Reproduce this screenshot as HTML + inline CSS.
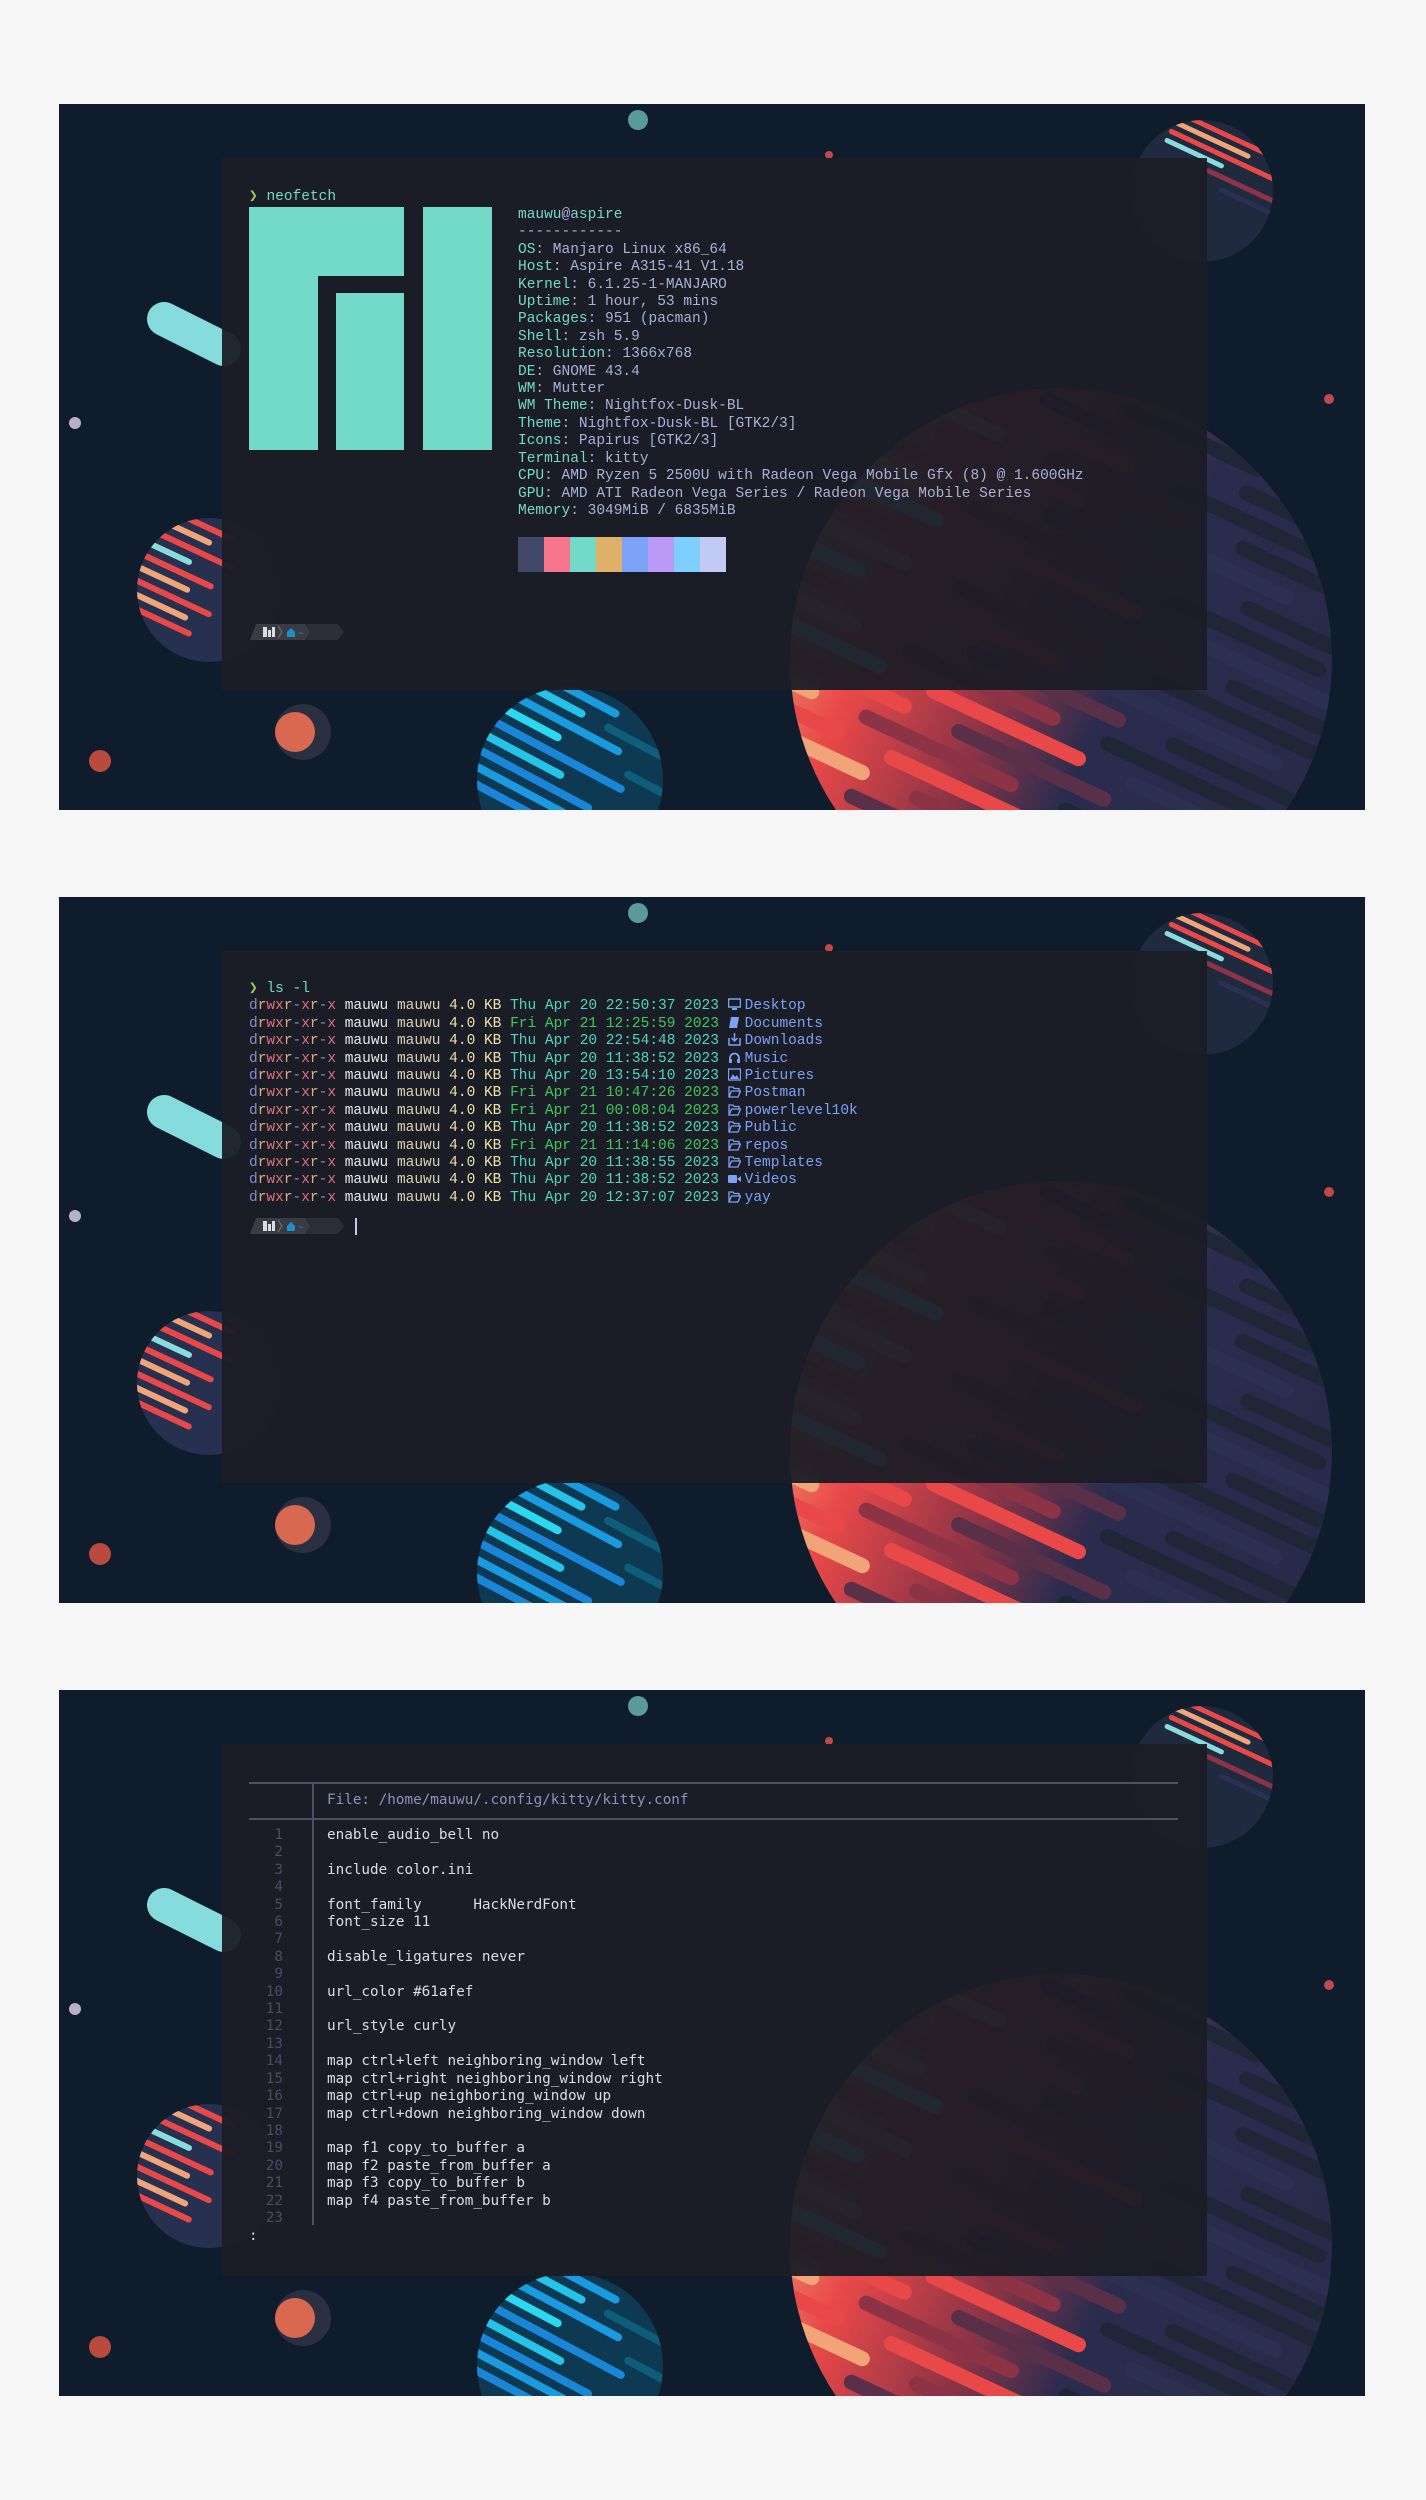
<!DOCTYPE html>
<html><head><meta charset="utf-8">
<style>
*{margin:0;padding:0;box-sizing:border-box}
html,body{width:1426px;height:2500px;overflow:hidden}
body{background:#f6f6f6;position:relative;font-family:"Liberation Mono","DejaVu Sans Mono",monospace}
.panel{position:absolute;left:59px;width:1306px;height:706px;background:#0f1c2b;overflow:hidden}
.panel svg.bg{position:absolute;left:0;top:0}
.term{position:absolute;left:163px;top:54px;width:985px;height:532px;background:rgba(27,28,38,0.95)}
.t{position:absolute;font-size:14.5px;line-height:17.4px;white-space:pre;color:#a9b1d6}
.k{color:#73daca}
.g{color:#9ece6a}
.bar{position:absolute;width:94px;height:16px}
.sw{position:absolute;top:379px;left:296px;height:35px;display:flex}
.sw span{width:26px;height:35px;display:block}
.conf{font-family:"DejaVu Sans Mono","Liberation Mono",monospace;font-size:14.3px;color:#dcdce4}
.num{position:absolute;font-family:"DejaVu Sans Mono",monospace;font-size:14.3px;line-height:17.4px;color:#4a4d62;text-align:right;width:40px;white-space:pre}
.d{color:#7f8fc9}.r{color:#d7b07a}.w{color:#e0707c}.x{color:#e0707c}.m{color:#8a8fb0}
.u{color:#e6e6e6}.gr{color:#d9d2ae}.sz{color:#ece3a6}.th{color:#4fd6be}.fr{color:#3fc95a}.n{color:#7aa2f7}
.ic{display:inline-block;width:13px;height:13px;vertical-align:-2px;margin-right:4px}
</style></head><body>

<svg width="0" height="0" style="position:absolute;left:0;top:0">
<defs>
<clipPath id="bp1"><circle cx="1002" cy="555" r="271"/></clipPath>
<clipPath id="bl1"><circle cx="511" cy="676" r="93"/></clipPath>
<clipPath id="tr1"><circle cx="1143" cy="87" r="71"/></clipPath>
<clipPath id="lp1"><circle cx="150" cy="486" r="72"/></clipPath>
<linearGradient id="gb" x1="731" y1="400" x2="1273" y2="650" gradientUnits="userSpaceOnUse"><stop offset="0" stop-color="#f0a478"/><stop offset="0.22" stop-color="#e84848"/><stop offset="0.45" stop-color="#8c3446"/><stop offset="0.62" stop-color="#2a2c4e"/><stop offset="1" stop-color="#272a48"/></linearGradient>
<symbol id="scene" viewBox="0 0 1306 706">
<g clip-path="url(#bp1)"><rect x="720" y="270" width="600" height="600" fill="url(#gb)"/>
<g stroke-linecap="round" stroke-width="15" transform="rotate(25 1002 555)">
<line x1="760" y1="300" x2="900" y2="300" stroke="#8c3446"/><line x1="960" y1="300" x2="1100" y2="300" stroke="#1f2636"/>
<line x1="700" y1="326" x2="820" y2="326" stroke="#e84848"/><line x1="880" y1="326" x2="1040" y2="326" stroke="#5a3048"/><line x1="1100" y1="326" x2="1260" y2="326" stroke="#1f2636"/>
<line x1="700" y1="352" x2="780" y2="352" stroke="#88dcdc"/><line x1="840" y1="352" x2="980" y2="352" stroke="#e84848"/><line x1="1040" y1="352" x2="1200" y2="352" stroke="#1f2636"/>
<line x1="700" y1="378" x2="850" y2="378" stroke="#f0a478"/><line x1="910" y1="378" x2="1060" y2="378" stroke="#8c3446"/><line x1="1120" y1="378" x2="1300" y2="378" stroke="#1f2636"/>
<line x1="700" y1="404" x2="760" y2="404" stroke="#88dcdc"/><line x1="800" y1="404" x2="950" y2="404" stroke="#e84848"/><line x1="1010" y1="404" x2="1180" y2="404" stroke="#2b3050"/>
<line x1="700" y1="430" x2="870" y2="430" stroke="#e84848"/><line x1="930" y1="430" x2="1080" y2="430" stroke="#5a3048"/><line x1="1150" y1="430" x2="1320" y2="430" stroke="#1f2636"/>
<line x1="700" y1="456" x2="800" y2="456" stroke="#f0a478"/><line x1="860" y1="456" x2="1020" y2="456" stroke="#8c3446"/><line x1="1080" y1="456" x2="1240" y2="456" stroke="#1f2636"/>
<line x1="700" y1="482" x2="830" y2="482" stroke="#88dcdc"/><line x1="890" y1="482" x2="1050" y2="482" stroke="#e84848"/><line x1="1110" y1="482" x2="1300" y2="482" stroke="#2b3050"/>
<line x1="700" y1="508" x2="900" y2="508" stroke="#e84848"/><line x1="960" y1="508" x2="1120" y2="508" stroke="#5a3048"/><line x1="1170" y1="508" x2="1320" y2="508" stroke="#1f2636"/>
<line x1="700" y1="534" x2="820" y2="534" stroke="#f0a478"/><line x1="880" y1="534" x2="1040" y2="534" stroke="#8c3446"/><line x1="1100" y1="534" x2="1280" y2="534" stroke="#1f2636"/>
<line x1="700" y1="560" x2="780" y2="560" stroke="#88dcdc"/><line x1="840" y1="560" x2="1000" y2="560" stroke="#e84848"/><line x1="1060" y1="560" x2="1240" y2="560" stroke="#2b3050"/>
<line x1="700" y1="586" x2="860" y2="586" stroke="#e84848"/><line x1="920" y1="586" x2="1080" y2="586" stroke="#5a3048"/><line x1="1140" y1="586" x2="1320" y2="586" stroke="#1f2636"/>
<line x1="700" y1="612" x2="800" y2="612" stroke="#f0a478"/><line x1="860" y1="612" x2="1020" y2="612" stroke="#8c3446"/><line x1="1080" y1="612" x2="1250" y2="612" stroke="#1f2636"/>
<line x1="700" y1="638" x2="840" y2="638" stroke="#88dcdc"/><line x1="900" y1="638" x2="1060" y2="638" stroke="#e84848"/><line x1="1120" y1="638" x2="1300" y2="638" stroke="#2b3050"/>
<line x1="700" y1="664" x2="880" y2="664" stroke="#e84848"/><line x1="940" y1="664" x2="1100" y2="664" stroke="#5a3048"/><line x1="1160" y1="664" x2="1320" y2="664" stroke="#1f2636"/>
<line x1="700" y1="690" x2="790" y2="690" stroke="#f0a478"/><line x1="850" y1="690" x2="1010" y2="690" stroke="#8c3446"/><line x1="1070" y1="690" x2="1240" y2="690" stroke="#1f2636"/>
<line x1="700" y1="716" x2="830" y2="716" stroke="#e84848"/><line x1="890" y1="716" x2="1050" y2="716" stroke="#e84848"/><line x1="1110" y1="716" x2="1290" y2="716" stroke="#2b3050"/>
<line x1="700" y1="742" x2="870" y2="742" stroke="#f0a478"/><line x1="930" y1="742" x2="1090" y2="742" stroke="#8c3446"/><line x1="1150" y1="742" x2="1320" y2="742" stroke="#1f2636"/>
<line x1="700" y1="768" x2="810" y2="768" stroke="#e84848"/><line x1="870" y1="768" x2="1030" y2="768" stroke="#5a3048"/><line x1="1090" y1="768" x2="1260" y2="768" stroke="#1f2636"/>
<line x1="700" y1="794" x2="850" y2="794" stroke="#f0a478"/><line x1="910" y1="794" x2="1070" y2="794" stroke="#e84848"/>
</g></g>
<g clip-path="url(#bl1)"><rect x="400" y="570" width="230" height="220" fill="#0d3a52"/><g stroke-linecap="round" stroke-width="8" transform="rotate(28 511 676)"><line x1="410" y1="596" x2="520" y2="596" stroke="#1a9be0"/><line x1="410" y1="612" x2="490" y2="612" stroke="#24c4e8"/><line x1="410" y1="628" x2="540" y2="628" stroke="#1a9be0"/><line x1="410" y1="644" x2="480" y2="644" stroke="#2ad8f0"/><line x1="410" y1="660" x2="560" y2="660" stroke="#1a86d8"/><line x1="410" y1="676" x2="500" y2="676" stroke="#24c4e8"/><line x1="410" y1="692" x2="540" y2="692" stroke="#1a86d8"/><line x1="410" y1="708" x2="520" y2="708" stroke="#1a9be0"/><line x1="410" y1="724" x2="540" y2="724" stroke="#1a86d8"/><line x1="520" y1="612" x2="620" y2="612" stroke="#0e5e7a"/><line x1="560" y1="644" x2="640" y2="644" stroke="#0e5e7a"/><line x1="560" y1="690" x2="640" y2="690" stroke="#0a2a3a"/></g></g>
<g clip-path="url(#tr1)"><rect x="1060" y="10" width="170" height="160" fill="#1f2a3e"/><g stroke-linecap="round" stroke-width="5" transform="rotate(25 1143 87)"><line x1="1090" y1="26" x2="1200" y2="26" stroke="#e84848"/><line x1="1090" y1="36" x2="1170" y2="36" stroke="#f0a478"/><line x1="1090" y1="46" x2="1210" y2="46" stroke="#e84848"/><line x1="1090" y1="56" x2="1150" y2="56" stroke="#88dcdc"/><line x1="1140" y1="66" x2="1240" y2="66" stroke="#8c3446"/><line x1="1160" y1="78" x2="1240" y2="78" stroke="#2b3050"/></g></g>
<g clip-path="url(#lp1)"><rect x="70" y="410" width="160" height="160" fill="#283050"/><g stroke-linecap="round" stroke-width="6" transform="rotate(25 150 486)"><line x1="60" y1="430" x2="150" y2="430" stroke="#e84848"/><line x1="60" y1="443" x2="130" y2="443" stroke="#f0a478"/><line x1="60" y1="456" x2="160" y2="456" stroke="#e84848"/><line x1="60" y1="469" x2="120" y2="469" stroke="#88dcdc"/><line x1="60" y1="482" x2="150" y2="482" stroke="#e84848"/><line x1="60" y1="495" x2="130" y2="495" stroke="#f0a478"/><line x1="60" y1="508" x2="160" y2="508" stroke="#e84848"/><line x1="60" y1="521" x2="140" y2="521" stroke="#f0a478"/><line x1="60" y1="534" x2="150" y2="534" stroke="#e84848"/></g></g>
<line x1="105" y1="215" x2="165" y2="245" stroke="#86dcdc" stroke-width="34" stroke-linecap="round"/>
<circle cx="579" cy="16" r="10" fill="#5a9a9a"/><circle cx="16" cy="319" r="6" fill="#b8b0c8"/><circle cx="41" cy="657" r="11" fill="#b84a3e"/><circle cx="244" cy="628" r="28" fill="#2a3040"/><circle cx="236" cy="628" r="20" fill="#d86850"/><circle cx="1270" cy="295" r="5" fill="#c04848"/><circle cx="770" cy="51" r="4" fill="#c04848"/>
</symbol>
</defs></svg>

<div class="panel" style="top:104px">
<svg class="bg" width="1306" height="706"><use href="#scene" width="1306" height="706"/></svg>
<div class="term">
<div class="t" style="left:27px;top:31px"><span class="g">❯</span> <span class="k">neofetch</span></div>
<svg style="position:absolute;left:27px;top:49px" width="243" height="243"><g fill="#73daca"><rect x="0" y="0" width="155" height="69"/><rect x="0" y="0" width="69" height="243"/><rect x="87" y="86" width="68" height="157"/><rect x="174" y="0" width="69" height="243"/></g></svg>
<div class="t" style="left:296px;top:49px"><span class="k">mauwu</span>@<span class="k">aspire</span>
------------
<span class="k">OS</span>: Manjaro Linux x86_64
<span class="k">Host</span>: Aspire A315-41 V1.18
<span class="k">Kernel</span>: 6.1.25-1-MANJARO
<span class="k">Uptime</span>: 1 hour, 53 mins
<span class="k">Packages</span>: 951 (pacman)
<span class="k">Shell</span>: zsh 5.9
<span class="k">Resolution</span>: 1366x768
<span class="k">DE</span>: GNOME 43.4
<span class="k">WM</span>: Mutter
<span class="k">WM Theme</span>: Nightfox-Dusk-BL
<span class="k">Theme</span>: Nightfox-Dusk-BL [GTK2/3]
<span class="k">Icons</span>: Papirus [GTK2/3]
<span class="k">Terminal</span>: kitty
<span class="k">CPU</span>: AMD Ryzen 5 2500U with Radeon Vega Mobile Gfx (8) @ 1.600GHz
<span class="k">GPU</span>: AMD ATI Radeon Vega Series / Radeon Vega Mobile Series
<span class="k">Memory</span>: 3049MiB / 6835MiB</div>
<div class="sw"><span style="background:#414868"></span><span style="background:#f7768e"></span><span style="background:#73daca"></span><span style="background:#e0af68"></span><span style="background:#7aa2f7"></span><span style="background:#bb9af7"></span><span style="background:#7dcfff"></span><span style="background:#c0caf5"></span></div>
<svg class="bar" style="left:28px;top:466px" viewBox="0 0 94 16"><path d="M6 0H55L60 8L55 16H0Z" fill="#3a3b44"/><path d="M55 0H88L94 8L88 16H55L60 8Z" fill="#2c2d36"/><rect x="13" y="3" width="4" height="10" fill="#ddd"/><rect x="18" y="6" width="3" height="7" fill="#ddd"/><rect x="22" y="3" width="3" height="10" fill="#ddd"/><path d="M28 2L32 8L28 14" stroke="#777" fill="none"/><path d="M37 8L41 4L45 8V13H37Z" fill="#1e90c8"/><text x="48" y="12" font-size="9" fill="#1e90c8" font-family="Liberation Mono">~</text></svg>
</div>
</div>

<div class="panel" style="top:897px">
<svg class="bg" width="1306" height="706"><use href="#scene" width="1306" height="706"/></svg>
<div class="term">
<div class="t" style="left:27px;top:30px"><span class="g">❯</span> <span class="k">ls -l</span></div>
<div class="t" style="left:27px;top:47.4px"><span class="d">d</span><span class="r">r</span><span class="w">w</span><span class="x">x</span><span class="r">r</span><span class="m">-</span><span class="x">x</span><span class="r">r</span><span class="m">-</span><span class="x">x</span> <span class="u">mauwu</span> <span class="gr">mauwu</span> <span class="sz">4.0 KB</span> <span class="th">Thu Apr 20 22:50:37 2023</span> <span class="n"><svg class="ic" viewBox="0 0 13 13"><rect x="0.5" y="1" width="12" height="8" fill="none" stroke="#7aa2f7" stroke-width="1.5"/><rect x="4" y="10" width="5" height="2" fill="#7aa2f7"/></svg>Desktop</span>
<span class="d">d</span><span class="r">r</span><span class="w">w</span><span class="x">x</span><span class="r">r</span><span class="m">-</span><span class="x">x</span><span class="r">r</span><span class="m">-</span><span class="x">x</span> <span class="u">mauwu</span> <span class="gr">mauwu</span> <span class="sz">4.0 KB</span> <span class="fr">Fri Apr 21 12:25:59 2023</span> <span class="n"><svg class="ic" viewBox="0 0 13 13"><path d="M3 1H11L9 12H1Z" fill="#7aa2f7"/></svg>Documents</span>
<span class="d">d</span><span class="r">r</span><span class="w">w</span><span class="x">x</span><span class="r">r</span><span class="m">-</span><span class="x">x</span><span class="r">r</span><span class="m">-</span><span class="x">x</span> <span class="u">mauwu</span> <span class="gr">mauwu</span> <span class="sz">4.0 KB</span> <span class="th">Thu Apr 20 22:54:48 2023</span> <span class="n"><svg class="ic" viewBox="0 0 13 13"><path d="M1 5V12H12V5M6.5 0V8M3.5 5L6.5 8L9.5 5" fill="none" stroke="#7aa2f7" stroke-width="1.5"/></svg>Downloads</span>
<span class="d">d</span><span class="r">r</span><span class="w">w</span><span class="x">x</span><span class="r">r</span><span class="m">-</span><span class="x">x</span><span class="r">r</span><span class="m">-</span><span class="x">x</span> <span class="u">mauwu</span> <span class="gr">mauwu</span> <span class="sz">4.0 KB</span> <span class="th">Thu Apr 20 11:38:52 2023</span> <span class="n"><svg class="ic" viewBox="0 0 13 13"><path d="M2 10V7A4.5 4.5 0 0 1 11 7V10" fill="none" stroke="#7aa2f7" stroke-width="1.8"/><rect x="1" y="8" width="3" height="4" fill="#7aa2f7"/><rect x="9" y="8" width="3" height="4" fill="#7aa2f7"/></svg>Music</span>
<span class="d">d</span><span class="r">r</span><span class="w">w</span><span class="x">x</span><span class="r">r</span><span class="m">-</span><span class="x">x</span><span class="r">r</span><span class="m">-</span><span class="x">x</span> <span class="u">mauwu</span> <span class="gr">mauwu</span> <span class="sz">4.0 KB</span> <span class="th">Thu Apr 20 13:54:10 2023</span> <span class="n"><svg class="ic" viewBox="0 0 13 13"><rect x="0.5" y="1" width="12" height="11" fill="none" stroke="#7aa2f7" stroke-width="1.3"/><path d="M2 11L5 6L7 9L9 7L11 11Z" fill="#7aa2f7"/></svg>Pictures</span>
<span class="d">d</span><span class="r">r</span><span class="w">w</span><span class="x">x</span><span class="r">r</span><span class="m">-</span><span class="x">x</span><span class="r">r</span><span class="m">-</span><span class="x">x</span> <span class="u">mauwu</span> <span class="gr">mauwu</span> <span class="sz">4.0 KB</span> <span class="fr">Fri Apr 21 10:47:26 2023</span> <span class="n"><svg class="ic" viewBox="0 0 13 13"><path d="M1 12V2H5L6 3.5H11V6M1 12L3.5 6H12.5L10 12Z" fill="none" stroke="#7aa2f7" stroke-width="1.3"/></svg>Postman</span>
<span class="d">d</span><span class="r">r</span><span class="w">w</span><span class="x">x</span><span class="r">r</span><span class="m">-</span><span class="x">x</span><span class="r">r</span><span class="m">-</span><span class="x">x</span> <span class="u">mauwu</span> <span class="gr">mauwu</span> <span class="sz">4.0 KB</span> <span class="fr">Fri Apr 21 00:08:04 2023</span> <span class="n"><svg class="ic" viewBox="0 0 13 13"><path d="M1 12V2H5L6 3.5H11V6M1 12L3.5 6H12.5L10 12Z" fill="none" stroke="#7aa2f7" stroke-width="1.3"/></svg>powerlevel10k</span>
<span class="d">d</span><span class="r">r</span><span class="w">w</span><span class="x">x</span><span class="r">r</span><span class="m">-</span><span class="x">x</span><span class="r">r</span><span class="m">-</span><span class="x">x</span> <span class="u">mauwu</span> <span class="gr">mauwu</span> <span class="sz">4.0 KB</span> <span class="th">Thu Apr 20 11:38:52 2023</span> <span class="n"><svg class="ic" viewBox="0 0 13 13"><path d="M1 12V2H5L6 3.5H11V6M1 12L3.5 6H12.5L10 12Z" fill="none" stroke="#7aa2f7" stroke-width="1.3"/></svg>Public</span>
<span class="d">d</span><span class="r">r</span><span class="w">w</span><span class="x">x</span><span class="r">r</span><span class="m">-</span><span class="x">x</span><span class="r">r</span><span class="m">-</span><span class="x">x</span> <span class="u">mauwu</span> <span class="gr">mauwu</span> <span class="sz">4.0 KB</span> <span class="fr">Fri Apr 21 11:14:06 2023</span> <span class="n"><svg class="ic" viewBox="0 0 13 13"><path d="M1 12V2H5L6 3.5H11V6M1 12L3.5 6H12.5L10 12Z" fill="none" stroke="#7aa2f7" stroke-width="1.3"/></svg>repos</span>
<span class="d">d</span><span class="r">r</span><span class="w">w</span><span class="x">x</span><span class="r">r</span><span class="m">-</span><span class="x">x</span><span class="r">r</span><span class="m">-</span><span class="x">x</span> <span class="u">mauwu</span> <span class="gr">mauwu</span> <span class="sz">4.0 KB</span> <span class="th">Thu Apr 20 11:38:55 2023</span> <span class="n"><svg class="ic" viewBox="0 0 13 13"><path d="M1 12V2H5L6 3.5H11V6M1 12L3.5 6H12.5L10 12Z" fill="none" stroke="#7aa2f7" stroke-width="1.3"/></svg>Templates</span>
<span class="d">d</span><span class="r">r</span><span class="w">w</span><span class="x">x</span><span class="r">r</span><span class="m">-</span><span class="x">x</span><span class="r">r</span><span class="m">-</span><span class="x">x</span> <span class="u">mauwu</span> <span class="gr">mauwu</span> <span class="sz">4.0 KB</span> <span class="th">Thu Apr 20 11:38:52 2023</span> <span class="n"><svg class="ic" viewBox="0 0 13 13"><rect x="0" y="3" width="9" height="8" rx="1" fill="#7aa2f7"/><path d="M9 7L13 4V10Z" fill="#7aa2f7"/></svg>Videos</span>
<span class="d">d</span><span class="r">r</span><span class="w">w</span><span class="x">x</span><span class="r">r</span><span class="m">-</span><span class="x">x</span><span class="r">r</span><span class="m">-</span><span class="x">x</span> <span class="u">mauwu</span> <span class="gr">mauwu</span> <span class="sz">4.0 KB</span> <span class="th">Thu Apr 20 12:37:07 2023</span> <span class="n"><svg class="ic" viewBox="0 0 13 13"><path d="M1 12V2H5L6 3.5H11V6M1 12L3.5 6H12.5L10 12Z" fill="none" stroke="#7aa2f7" stroke-width="1.3"/></svg>yay</span></div>
<svg class="bar" style="left:28px;top:267px" viewBox="0 0 94 16"><path d="M6 0H55L60 8L55 16H0Z" fill="#3a3b44"/><path d="M55 0H88L94 8L88 16H55L60 8Z" fill="#2c2d36"/><rect x="13" y="3" width="4" height="10" fill="#ddd"/><rect x="18" y="6" width="3" height="7" fill="#ddd"/><rect x="22" y="3" width="3" height="10" fill="#ddd"/><path d="M28 2L32 8L28 14" stroke="#777" fill="none"/><path d="M37 8L41 4L45 8V13H37Z" fill="#1e90c8"/><text x="48" y="12" font-size="9" fill="#1e90c8" font-family="Liberation Mono">~</text></svg>
<div style="position:absolute;left:133px;top:267px;width:2px;height:17px;background:#c0caf5"></div>
</div>
</div>

<div class="panel" style="top:1690px">
<svg class="bg" width="1306" height="706"><use href="#scene" width="1306" height="706"/></svg>
<div class="term">
<div style="position:absolute;left:27px;top:38px;width:929px;height:2px;background:#4f5163"></div>
<div style="position:absolute;left:27px;top:74px;width:929px;height:2px;background:#4f5163"></div>
<div style="position:absolute;left:90px;top:38px;width:2px;height:443px;background:#4f5163"></div>
<div class="t conf" style="left:105px;top:48px;color:#8d93b8">File: /home/mauwu/.config/kitty/kitty.conf</div>
<div class="num" style="left:21px;top:83px">1
2
3
4
5
6
7
8
9
10
11
12
13
14
15
16
17
18
19
20
21
22
23</div>
<div class="t conf" style="left:105px;top:83px;color:#dcdce4">enable_audio_bell no

include color.ini

font_family      HackNerdFont
font_size 11

disable_ligatures never

url_color #61afef

url_style curly

map ctrl+left neighboring_window left
map ctrl+right neighboring_window right
map ctrl+up neighboring_window up
map ctrl+down neighboring_window down

map f1 copy_to_buffer a
map f2 paste_from_buffer a
map f3 copy_to_buffer b
map f4 paste_from_buffer b</div>
<div class="t conf" style="left:27px;top:484px;color:#dcdce4">:</div>
</div>
</div>
</body></html>
